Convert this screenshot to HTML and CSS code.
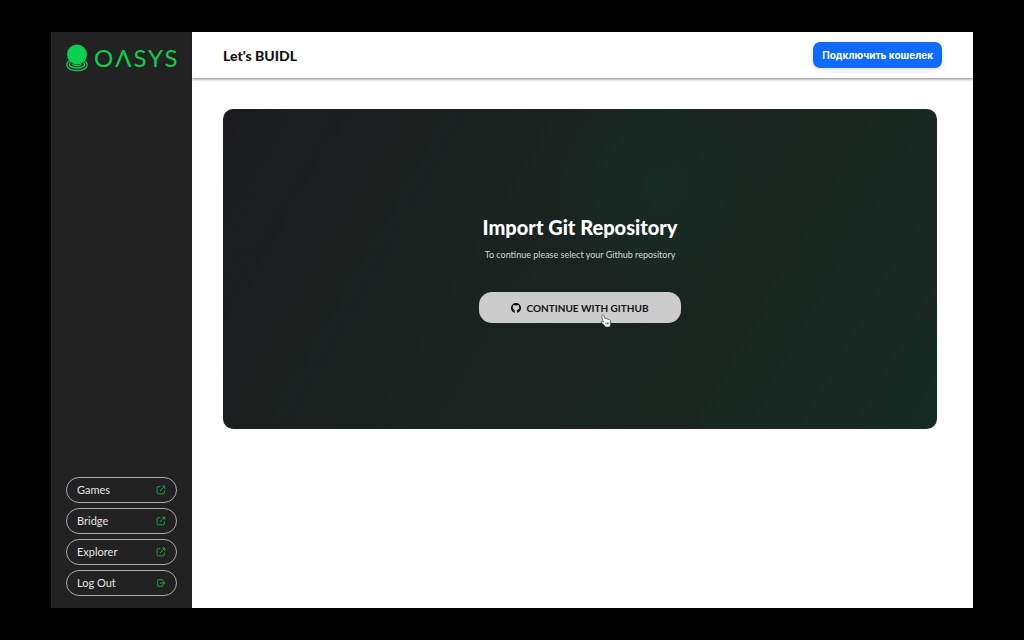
FILE: index.html
```html
<!DOCTYPE html>
<html lang="en">
<head>
    <meta charset="UTF-8">
    <title>Let's BUIDL</title>
    <link rel="stylesheet" href="styles.css">
</head>
<body>
<svg class="sprite" aria-hidden="true">
    <symbol id="external" viewBox="0 0 18 18">
        <path d="M8 3H4a2 2 0 0 0-2 2v9a2 2 0 0 0 2 2h9a2 2 0 0 0 2-2v-4M11 2h5v5M16 2 7 11"/>
    </symbol>
    <symbol id="logout" viewBox="0 0 18 18">
        <path d="M12 6V4a1 1 0 0 0-1-1H4a1 1 0 0 0-1 1v10a1 1 0 0 0 1 1h7a1 1 0 0 0 1-1v-2M7 9h9M13 6l3 3-3 3"/>
    </symbol>
</svg>
<div class="app">
    <aside class="sidebar">
        <a class="logo" href="#">
            <svg class="logo-mark" viewBox="0 0 22 28" aria-hidden="true">
                <g fill="none" stroke="#0bd04f" stroke-width="1.3">
                    <path d="M4 16.500C-1 19-.5 26.500 11 26.500S23 19 18 16.500"/>
                    <path d="M4.500 18.500C1.500 21.500 5 24 11 24s9.500-2.500 6.500-5.500"/>
                    <path d="M7 20c-1.500 2 8.500 2.500 8 0"/>
                </g>
                <circle cx="11" cy="10.500" r="10" fill="#0bd04f"/>
            </svg>
            <span class="logo-text">OΛSYS</span>
        </a>
        <nav class="menu">
            <a class="menu-item" href="#">Games <svg class="icon"><use href="#external"/></svg></a>
            <a class="menu-item" href="#">Bridge <svg class="icon"><use href="#external"/></svg></a>
            <a class="menu-item" href="#">Explorer <svg class="icon"><use href="#external"/></svg></a>
            <a class="menu-item" href="#">Log Out <svg class="icon"><use href="#logout"/></svg></a>
        </nav>
    </aside>
    <div class="page">
        <header class="header">
            <h1>Let's BUIDL</h1>
            <button class="wallet" type="button" lang="ru">Подключить кошелек</button>
        </header>
        <main class="content">
            <section class="card">
                <h2>Import Git Repository</h2>
                <p>To continue please select your Github repository</p>
                <button class="github" type="button">
                    <svg class="github-icon" viewBox="0 0 16 16" aria-hidden="true">
                        <path d="M5.500 15.500C2.500 14.500 0 11.500 0 8a8 8 0 0 1 16 0c0 3.500-2.500 6.500-5.500 7.500-.4.100-.6-.1-.6-.5v-2.500c0-.7-.2-1.100-.5-1.400 2-.3 3.900-1.100 3.900-4 0-.9-.3-1.600-.9-2.200.2-.6.200-1.300-.1-2-.8 0-1.600.4-2.200.9a8 8 0 0 0-4.200 0c-.6-.5-1.400-.9-2.200-.9-.3.700-.3 1.400-.1 2-.6.600-.9 1.300-.9 2.200 0 2.900 1.900 3.700 3.900 4-.3.300-.5.700-.5 1.100-.8.300-1.800.2-2.400-.9-.3-.5-.8-.8-1.300-.8.700.3 1 .9 1.300 1.600.4 1 1.400 1.300 2.400 1.100v1.800c0 .4-.2.600-.6.500z"/>
                    </svg>
                    CONTINUE WITH GITHUB
                    <svg class="pointer" viewBox="0 0 12 14" aria-hidden="true">
                        <path d="M2 1.500c.8-.8 1.700-.2 2 .5l1.200 3c.7-.6 1.500-.3 1.800.2.700-.4 1.400-.1 1.700.5.9-.3 1.500.1 1.700.9.400 2 .6 3.400-.3 4.900L10 13H5.500C4.500 11 2.500 10 1 8.500c-.3-1 .8-1.300 2.500-.3L1.700 2.800c-.1-.5 0-.9.3-1.300z"/>
                        <path d="M6 8.500v2M7.500 8.500v2M9 8.300v2"/>
                    </svg>
                </button>
            </section>
        </main>
    </div>
</div>
</body>
</html>
```
FILE: styles.css
```css
* {
    margin: 0;
    padding: 0;
    box-sizing: border-box;
}

body {
    display: flex;
    min-height: 100vh;
    padding: 32px 51px;
    background-color: #000;
    font-family: Lato, "Liberation Sans", sans-serif;
}

a {
    text-decoration: none;
}

button {
    border: 0;
    cursor: pointer;
}

.sprite {
    display: none;
}

.app {
    flex: 1;
    display: flex;
    background-color: #fff;
}

.sidebar {
    display: flex;
    flex-direction: column;
    justify-content: space-between;
    width: 141px;
    padding: 12px 15px;
    background-color: #222;
}

.logo {
    display: flex;
    align-items: center;
    gap: 6px;
    color: #0bd04f;
}

.logo-mark {
    flex-shrink: 0;
    width: 22px;
    height: 28px;
}

.logo-text {
    font-size: 24px;
    line-height: 28px;
    letter-spacing: 2px;
}

.menu {
    display: flex;
    flex-direction: column;
    gap: 5px;
}

.menu-item {
    display: flex;
    align-items: center;
    justify-content: space-between;
    height: 26px;
    padding: 0 10px;
    border: 1px solid #aaa;
    border-radius: 13px;
    color: #e4e4e4;
    font-size: 11px;
    line-height: 24px;
}

.icon {
    width: 10px;
    height: 10px;
    fill: none;
    stroke: #0fb84a;
    stroke-width: 1.6;
}

.page {
    flex: 1;
    display: flex;
    flex-direction: column;
}

.header {
    display: flex;
    align-items: center;
    justify-content: space-between;
    height: 46px;
    padding: 0 31px;
    box-shadow: 0 1px 3px rgba(0, 0, 0, .5);
}

.header h1 {
    color: #111;
    font-size: 14px;
    font-weight: 900;
}

.wallet {
    height: 26px;
    padding: 0 9px;
    border-radius: 7px;
    background-color: #0e6bfd;
    box-shadow: 0 2px 6px rgba(0, 0, 0, .12);
    color: #fff;
    font: bold 10px Inter, "Liberation Sans", sans-serif;
}

.content {
    padding: 31px 36px 31px 31px;
}

.card {
    display: flex;
    flex-direction: column;
    align-items: center;
    justify-content: center;
    min-height: 320px;
    border-radius: 10px;
    background: radial-gradient(circle at 61% 24%, rgba(24, 46, 38, .7), rgba(24, 46, 38, .5) 60px, rgba(24, 46, 38, 0) 100px), linear-gradient(120deg, #1c1c1e, #1a2320 40%, #192620 70%, #182b25);
    color: #fff;
}

.card h2 {
    margin-bottom: 8px;
    font-size: 20px;
    font-weight: 900;
    line-height: 24px;
}

.card p {
    margin-bottom: 29px;
    color: #d5d9d7;
    font-size: 9px;
    line-height: 16px;
}

.github {
    position: relative;
    display: flex;
    align-items: center;
    justify-content: center;
    gap: 5px;
    width: 202px;
    height: 31px;
    border-radius: 13px;
    background-color: #cbcccb;
    color: #111;
    font: bold 10px Lato, "Liberation Sans", sans-serif;
}

.github-icon {
    width: 10px;
    height: 10px;
}

.pointer {
    position: absolute;
    left: 121px;
    top: 22px;
    width: 12px;
    height: 14px;
    fill: #fff;
    stroke: #333;
    stroke-width: .7;
}
```
